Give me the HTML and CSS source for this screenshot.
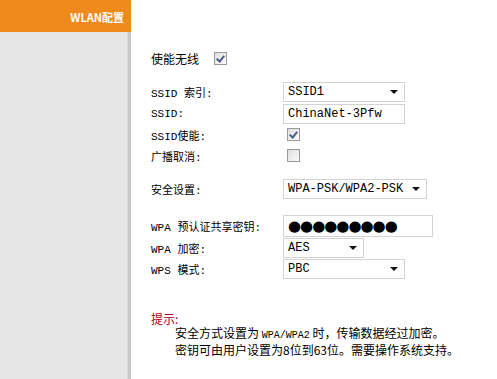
FILE: index.html
```html
<!DOCTYPE html>
<html lang="zh-CN">
<head>
  <meta charset="UTF-8">
  <title>WLAN配置</title>
  <link rel="stylesheet" href="styles.css">
</head>
<body>
  <div class="pagina">
    <aside class="menu">
      <div class="menu-titulo">WLAN配置</div>
    </aside>

    <main class="conteudo">
      <div class="linha linha-topo">
        <span class="rotulo-curto">使能无线</span>
        <span class="caixa marcada"></span>
      </div>

      <div class="grupo grupo-ssid">
        <div class="linha alta">
          <span class="rotulo">SSID 索引:</span>
          <div class="seletor largo"><span>SSID1</span><i class="seta"></i></div>
        </div>
        <div class="linha">
          <span class="rotulo">SSID:</span>
          <div class="campo largo">ChinaNet-3Pfw</div>
        </div>
        <div class="linha">
          <span class="rotulo">SSID使能:</span>
          <span class="caixa marcada recuo"></span>
        </div>
        <div class="linha">
          <span class="rotulo">广播取消:</span>
          <span class="caixa recuo"></span>
        </div>
      </div>

      <div class="grupo grupo-seguranca">
        <div class="linha alta">
          <span class="rotulo">安全设置:</span>
          <div class="seletor medio"><span>WPA-PSK/WPA2-PSK</span><i class="seta"></i></div>
        </div>
      </div>

      <div class="grupo grupo-wpa">
        <div class="linha alta">
          <span class="rotulo">WPA 预认证共享密钥:</span>
          <div class="campo senha">●●●●●●●●●</div>
        </div>
        <div class="linha">
          <span class="rotulo">WPA 加密:</span>
          <div class="seletor curto"><span>AES</span><i class="seta"></i></div>
        </div>
        <div class="linha">
          <span class="rotulo">WPS 模式:</span>
          <div class="seletor largo"><span>PBC</span><i class="seta"></i></div>
        </div>
      </div>

      <div class="dica">
        <p class="dica-titulo">提示:</p>
        <p class="dica-texto">安全方式设置为 <span class="latim">WPA/WPA2</span> 时，传输数据经过加密。</p>
        <p class="dica-texto">密钥可由用户设置为8位到63位。需要操作系统支持。</p>
      </div>
    </main>
  </div>
</body>
</html>
```

FILE: styles.css
```css
body {
  margin: 0;
  background: #fff;
  color: #000;
  font-family: "Noto Sans CJK SC", sans-serif;
  font-size: 12px;
}

.pagina {
  display: flex;
  height: 379px;
  overflow: hidden;
}

.menu {
  width: 128px;
  background: #e6e6e6;
  border-right: 3px solid #c8c8c8;
  box-shadow: inset -1px 0 0 #dadada;
}

.menu-titulo {
  height: 32px;
  margin-right: -3px;
  background: #ef8a1d;
  color: #fff;
  font-weight: bold;
  font-size: 11px;
  text-align: right;
  padding-right: 7px;
  line-height: 35px;
  box-sizing: border-box;
}

.conteudo {
  flex: 1;
  padding: 48px 0 0 20px;
}

.linha {
  display: flex;
  align-items: center;
  height: 21px;
}

.linha.alta {
  height: 22px;
}

.rotulo-curto {
  width: 63px;
}

.rotulo {
  width: 132px;
  font-family: "Liberation Mono", "Noto Sans CJK SC", monospace;
  font-size: 11px;
}

.grupo-ssid {
  margin-top: 12px;
}

.grupo-seguranca {
  margin-top: 12px;
}

.grupo-wpa {
  margin-top: 15px;
}

.caixa {
  width: 11px;
  height: 11px;
  border: 1px solid #9a9a9a;
  background: linear-gradient(135deg, #dedede, #fbfbfb);
  position: relative;
}

.caixa.recuo {
  margin-left: 4px;
}

.caixa.marcada::after {
  content: "";
  position: absolute;
  left: 3px;
  top: 1px;
  width: 3px;
  height: 6px;
  border: solid #4a5b8e;
  border-width: 0 2px 2px 0;
  transform: rotate(40deg);
}

.seletor,
.campo {
  height: 20px;
  box-sizing: border-box;
  border: 1px solid #d2d2d2;
  background: #fff;
  font-family: "Liberation Mono", monospace;
  font-size: 12px;
  padding: 0 4px;
  display: flex;
  align-items: center;
}

.seletor span {
  flex: 1;
}

.seta {
  width: 0;
  height: 0;
  border-left: 4px solid transparent;
  border-right: 4px solid transparent;
  border-top: 4px solid #111;
  margin-right: 2px;
}

.largo {
  width: 122px;
}

.medio {
  width: 144px;
}

.curto {
  width: 81px;
}

.senha {
  width: 150px;
  height: 22px;
  font-family: "DejaVu Sans", sans-serif;
  font-size: 15px;
  letter-spacing: -1px;
  color: #000;
}

.dica {
  margin-top: 33px;
}

.dica p {
  margin: 0;
  line-height: 14px;
}

.dica-titulo {
  color: #a8001a;
}

.dica-texto {
  padding-left: 24px;
}

.latim {
  font-family: "Liberation Mono", monospace;
  font-size: 10px;
}
```
